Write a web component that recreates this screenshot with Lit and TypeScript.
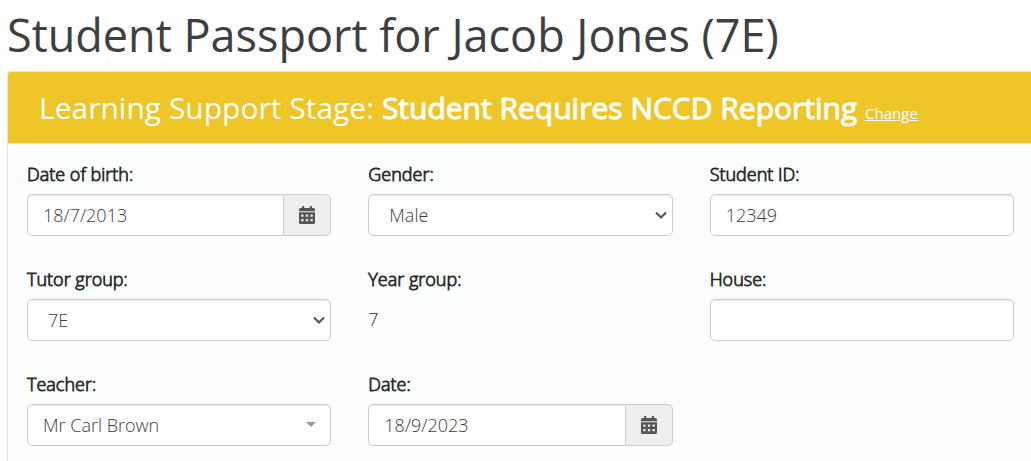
import { LitElement, html, css } from "lit";
import { customElement } from "lit/decorators.js";

const calendar = html`
  <svg class="calendar" viewBox="0 0 16 18" aria-hidden="true">
    <path fill="currentColor" fill-rule="evenodd" d="M3 0.6Q3 0 3.6 0H4.6Q5.2 0 5.2 0.6V2H10.8V0.6Q10.8 0 11.4 0H12.4Q13 0 13 0.6V2H14.5Q16 2 16 3.5V5.2H0V3.5Q0 2 1.5 2H3ZM0 6.2H16V16.5Q16 18 14.5 18H1.5Q0 18 0 16.5ZM2.2 8.4V10.7H4.5V8.4ZM6.9 8.4V10.7H9.2V8.4ZM11.5 8.4V10.7H13.8V8.4ZM2.2 13V15.3H4.5V13ZM6.9 13V15.3H9.2V13ZM11.5 13V15.3H13.8V13Z"/>
  </svg>
`;

@customElement("app-root")
export class AppRoot extends LitElement {
  static styles = css`
    :host {
      display: block;
      overflow: hidden;
      padding-left: 7px;
      font-family: "Open Sans", sans-serif;
      font-size: 18px;
      font-weight: 300;
      line-height: 24px;
      color: #2b2b2b;
    }
    * {
      box-sizing: border-box;
    }
    .title {
      margin: 0;
      padding: 4px 0 5px;
      font-size: 45px;
      font-weight: 400;
      line-height: 62px;
      color: #3e403f;
    }
    .panel {
      border: 1px solid #e4e8e7;
      border-right: 0;
      border-bottom: 0;
      border-radius: 4px 0 0 0;
      background: #fbfefd;
    }
    .banner {
      padding: 16px 31px 15px;
      border-bottom: 1px solid #e4e4dc;
      border-radius: 3px 0 0 0;
      background: #eec627;
      color: #fff;
    }
    .stage {
      margin: 0;
      font-size: 30px;
      font-weight: 400;
      line-height: 40px;
    }
    .stage-name {
      font-weight: 400;
      -webkit-text-stroke: 1px currentColor;
    }
    .change {
      font-size: 15px;
      line-height: 20px;
      color: inherit;
    }
    .fields {
      display: grid;
      grid-template-columns: repeat(3, minmax(0, 1fr));
      gap: 31px 37px;
      padding: 18px 17px 18px 19px;
    }
    .field {
      display: flex;
      flex-direction: column;
      gap: 8px;
      height: 74px;
    }
    .label {
      -webkit-text-stroke: 0.8px currentColor;
    }
    .control {
      width: 100%;
      height: 42px;
      margin: 0;
      padding: 0 15px;
      border: 1px solid #ccc;
      border-radius: 5px;
      background: #fff;
      box-shadow: inset 0 1px 1px rgba(0, 0, 0, 0.075);
      font: inherit;
      color: #3c3c3c;
    }
    .picker {
      position: relative;
    }
    .picker .control {
      appearance: none;
      padding: 0 36px 0 20px;
      display: block;
    }
    .picker .combo {
      padding-left: 15px;
    }
    .arrow {
      position: absolute;
      top: 17px;
      right: 6px;
      width: 12px;
      height: 9px;
      color: #555;
      pointer-events: none;
    }
    .caret {
      position: absolute;
      top: 18px;
      right: 15px;
      width: 10px;
      height: 5px;
      color: #999;
      pointer-events: none;
    }
    .group {
      display: flex;
    }
    .group .control {
      flex: 1;
      min-width: 0;
      border-right: 0;
      border-radius: 5px 0 0 5px;
    }
    .addon {
      display: flex;
      align-items: center;
      justify-content: center;
      width: 48px;
      padding: 0;
      border: 1px solid #ccc;
      border-radius: 0 5px 5px 0;
      background: #eee;
      color: #555;
    }
    .calendar {
      width: 16px;
      height: 18px;
    }
    .value {
      line-height: 40px;
    }
  `;

  private text(id: string, label: string, value: string) {
    return html`<div class="field">
      <label class="label" for=${id}>${label}</label>
      <input class="control" id=${id} type="text" .value=${value} />
    </div>`;
  }

  private date(id: string, label: string, value: string) {
    return html`<div class="field">
      <label class="label" for=${id}>${label}</label>
      <div class="group">
        <input class="control" id=${id} type="text" .value=${value} />
        <button class="addon" type="button" aria-label="Choose date">${calendar}</button>
      </div>
    </div>`;
  }

  private select(id: string, label: string, value: string, combo = false) {
    return html`<div class="field">
      <label class="label" for=${id}>${label}</label>
      <div class="picker">
        <select class="control ${combo ? "combo" : ""}" id=${id}>
          <option>${value}</option>
        </select>
        ${combo
          ? html`<svg class="caret" viewBox="0 0 10 5" aria-hidden="true"><path d="M0 0H10L5 5Z" fill="currentColor" /></svg>`
          : html`<svg class="arrow" viewBox="0 0 12 9" aria-hidden="true"><path d="M1 1.5L6 6.5L11 1.5" fill="none" stroke="currentColor" stroke-width="2.2" /></svg>`}
      </div>
    </div>`;
  }

  render() {
    return html`
      <h1 class="title">Student Passport for Jacob Jones (7E)</h1>
      <section class="panel">
        <header class="banner">
          <h2 class="stage">
            Learning Support Stage:
            <strong class="stage-name">Student Requires NCCD Reporting</strong>
            <a class="change" href="#">Change</a>
          </h2>
        </header>
        <form class="fields">
          ${this.date("dob", "Date of birth:", "18/7/2013")}
          ${this.select("gender", "Gender:", "Male")}
          ${this.text("student-id", "Student ID:", "12349")}
          ${this.select("tutor", "Tutor group:", "7E")}
          <div class="field">
            <span class="label">Year group:</span>
            <output class="value" aria-label="Year group">7</output>
          </div>
          ${this.text("house", "House:", "")}
          ${this.select("teacher", "Teacher:", "Mr Carl Brown", true)}
          ${this.date("date", "Date:", "18/9/2023")}
        </form>
      </section>
    `;
  }
}
